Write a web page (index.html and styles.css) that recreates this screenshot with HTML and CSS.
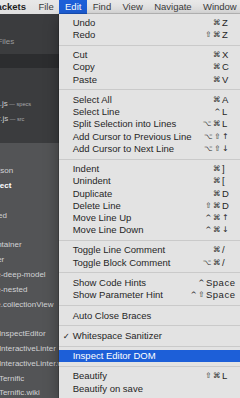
FILE: index.html
```html
<!DOCTYPE html>
<html lang="en">
<head>
    <meta charset="UTF-8">
    <meta name="viewport" content="width=device-width, initial-scale=1.0">
    <title>Brackets - Edit menu</title>
    <link rel="stylesheet" href="styles.css">
</head>
<body>

    <div class="screen">
        <div class="menubar">
            <span class="app-name">Brackets</span>
            <span class="menu-title">File</span>
            <span class="menu-title open">Edit</span>
            <span class="menu-title">Find</span>
            <span class="menu-title">View</span>
            <span class="menu-title">Navigate</span>
            <span class="menu-title">Window</span>
            <span class="menu-title">Help</span>
        </div>

        <div class="workspace">
            <aside class="sidebar">
                <div class="working-set">
                    <div class="working-header">Working Files</div>
                    <ul class="file-list">
                        <li class="selected">index.js</li>
                        <li>app.js</li>
                        <li>main.js</li>
                        <li>UtilsSpec.js<span class="dir"> — specs</span></li>
                        <li>Controller.js<span class="dir"> — src</span></li>
                    </ul>
                </div>
                <div class="project">
                    <ul class="tree">
                        <li>.git</li>
                        <li>_backup.json</li>
                        <li class="current">_my-project</li>
                        <li>_old</li>
                        <li>_unfinished</li>
                        <li>adapter</li>
                        <li>agent-container</li>
                        <li>app-loader</li>
                        <li>backbone-deep-model</li>
                        <li>backbone-nested</li>
                        <li>backbone.collectionView</li>
                        <li>bin</li>
                        <li>brackets-InspectEditor</li>
                        <li>brackets-InteractiveLinter</li>
                        <li>brackets-InteractiveLinter.wiki</li>
                        <li>brackets-Ternific</li>
                        <li>brackets-Ternific.wiki</li>
                    </ul>
                </div>
            </aside>

            <!-- open Edit menu -->
            <ul class="dropdown">
                <li><span class="label">Undo</span><span class="mods">⌘</span><span class="key">Z</span></li>
                <li><span class="label">Redo</span><span class="mods">⇧⌘</span><span class="key">Z</span></li>
                <li class="sep"></li>
                <li><span class="label">Cut</span><span class="mods">⌘</span><span class="key">X</span></li>
                <li><span class="label">Copy</span><span class="mods">⌘</span><span class="key">C</span></li>
                <li><span class="label">Paste</span><span class="mods">⌘</span><span class="key">V</span></li>
                <li class="sep"></li>
                <li><span class="label">Select All</span><span class="mods">⌘</span><span class="key">A</span></li>
                <li><span class="label">Select Line</span><span class="mods">^</span><span class="key">L</span></li>
                <li><span class="label">Split Selection into Lines</span><span class="mods">⌥⌘</span><span class="key">L</span></li>
                <li><span class="label">Add Cursor to Previous Line</span><span class="mods">⌥⇧</span><span class="key arrow">↑</span></li>
                <li><span class="label">Add Cursor to Next Line</span><span class="mods">⌥⇧</span><span class="key arrow">↓</span></li>
                <li class="sep"></li>
                <li><span class="label">Indent</span><span class="mods">⌘</span><span class="key">]</span></li>
                <li><span class="label">Unindent</span><span class="mods">⌘</span><span class="key">[</span></li>
                <li><span class="label">Duplicate</span><span class="mods">⌘</span><span class="key">D</span></li>
                <li><span class="label">Delete Line</span><span class="mods">⇧⌘</span><span class="key">D</span></li>
                <li><span class="label">Move Line Up</span><span class="mods">^⌘</span><span class="key arrow">↑</span></li>
                <li><span class="label">Move Line Down</span><span class="mods">^⌘</span><span class="key arrow">↓</span></li>
                <li class="sep"></li>
                <li><span class="label">Toggle Line Comment</span><span class="mods">⌘</span><span class="key">/</span></li>
                <li><span class="label">Toggle Block Comment</span><span class="mods">⌥⌘</span><span class="key">/</span></li>
                <li class="sep"></li>
                <li><span class="label">Show Code Hints</span><span class="mods">^</span><span class="key space">Space</span></li>
                <li><span class="label">Show Parameter Hint</span><span class="mods">^⇧</span><span class="key space">Space</span></li>
                <li class="sep"></li>
                <li><span class="label">Auto Close Braces</span></li>
                <li class="sep"></li>
                <li><span class="check">✓</span><span class="label">Whitespace Sanitizer</span></li>
                <li class="sep"></li>
                <li class="active"><span class="label">Inspect Editor DOM</span></li>
                <li class="sep"></li>
                <li><span class="label">Beautify</span><span class="mods">⇧⌘</span><span class="key">L</span></li>
                <li><span class="label">Beautify on save</span></li>
            </ul>
        </div>
    </div>

</body>
</html>
```

FILE: styles.css
```css
html, body {
    margin: 0;
    padding: 0;
}
body {
    font-family: "Liberation Sans", "DejaVu Sans", sans-serif;
    background-color: #535456;
    height: 398px;
    overflow: hidden;
}
.screen {
    height: 398px;
    overflow: hidden;
}

/* top menu bar */
.menubar {
    display: flex;
    height: 14px;
    line-height: 14px;
    font-size: 9.5px;
    color: #3b3b3b;
    background: linear-gradient(#e8e8e8, #dfdfdf);
    white-space: nowrap;
}
.menubar span {
    flex-shrink: 0;
}
.app-name {
    font-weight: bold;
    color: #1e1e1e;
    margin-left: -14.1px;
    padding-right: 6.75px;
}
.menu-title {
    padding: 0 5.65px;
}
.menu-title.open {
    background-color: #1d5fd8;
    color: #fff;
}

.workspace {
    position: relative;
    height: 384px;
}

/* sidebar, only its right end is in view */
.sidebar {
    width: 170px;
    height: 100%;
    margin-left: -44px;
    font-size: 8px;
}
.working-set {
    height: 129px;
    box-sizing: border-box;
    padding-top: 20.85px;
    background-color: #3b3c3e;
}
.working-header {
    padding-left: 10px;
    line-height: 14.3px;
    margin-bottom: 4.4px;
    color: #9a9b9d;
}
.file-list, .tree, .dropdown {
    list-style: none;
    margin: 0;
    padding: 0;
}
.file-list li {
    height: 14.5px;
    line-height: 14.5px;
    padding-left: 10px;
    color: #c9cacc;
    white-space: nowrap;
}
.file-list li.selected {
    background-color: #2c2d2f;
}
.dir {
    font-size: 5.6px;
    color: #a9aaac;
}
.project {
    height: 255px;
    box-sizing: border-box;
    padding-top: 6.6px;
    background-color: #535456;
}
.tree li {
    height: 14.8px;
    line-height: 14.8px;
    padding-left: 10px;
    color: #d2d3d5;
    white-space: nowrap;
}
.tree li.current {
    color: #fff;
    font-weight: bold;
}

/* the open Edit menu */
.dropdown {
    position: absolute;
    top: 0;
    left: 58.7px;
    width: 190px;
    padding: 2.6px 0 3px;
    background-color: #e3e3e3;
    box-shadow: 0 0 0 0.5px rgba(0,0,0,0.3), 0 5px 14px rgba(0,0,0,0.35);
    font-size: 9.5px;
    color: #262626;
}
.dropdown li {
    display: flex;
    height: 12.22px;
    line-height: 12.22px;
    padding: 0 17.7px 0 14px;
    white-space: nowrap;
}
.dropdown li.sep {
    height: 1px;
    padding: 0;
    margin: 3.55px 0;
    background-color: #cacaca;
}
.dropdown li.active {
    background-color: #1d5fd8;
    color: #fff;
}
.label {
    flex: 1;
}
.mods {
    font-family: "DejaVu Sans", sans-serif;
    font-size: 7.5px;
    letter-spacing: 1.5px;
}
.key {
    width: 9px;
}
.key.arrow {
    font-family: "DejaVu Sans", sans-serif;
    font-size: 8px;
}
.key.space {
    width: 31px;
    margin-right: -6px;
    letter-spacing: 0.5px;
}
.check {
    width: 10px;
    margin-left: -10px;
    font-family: "DejaVu Sans", sans-serif;
    font-size: 8.5px;
}
```
